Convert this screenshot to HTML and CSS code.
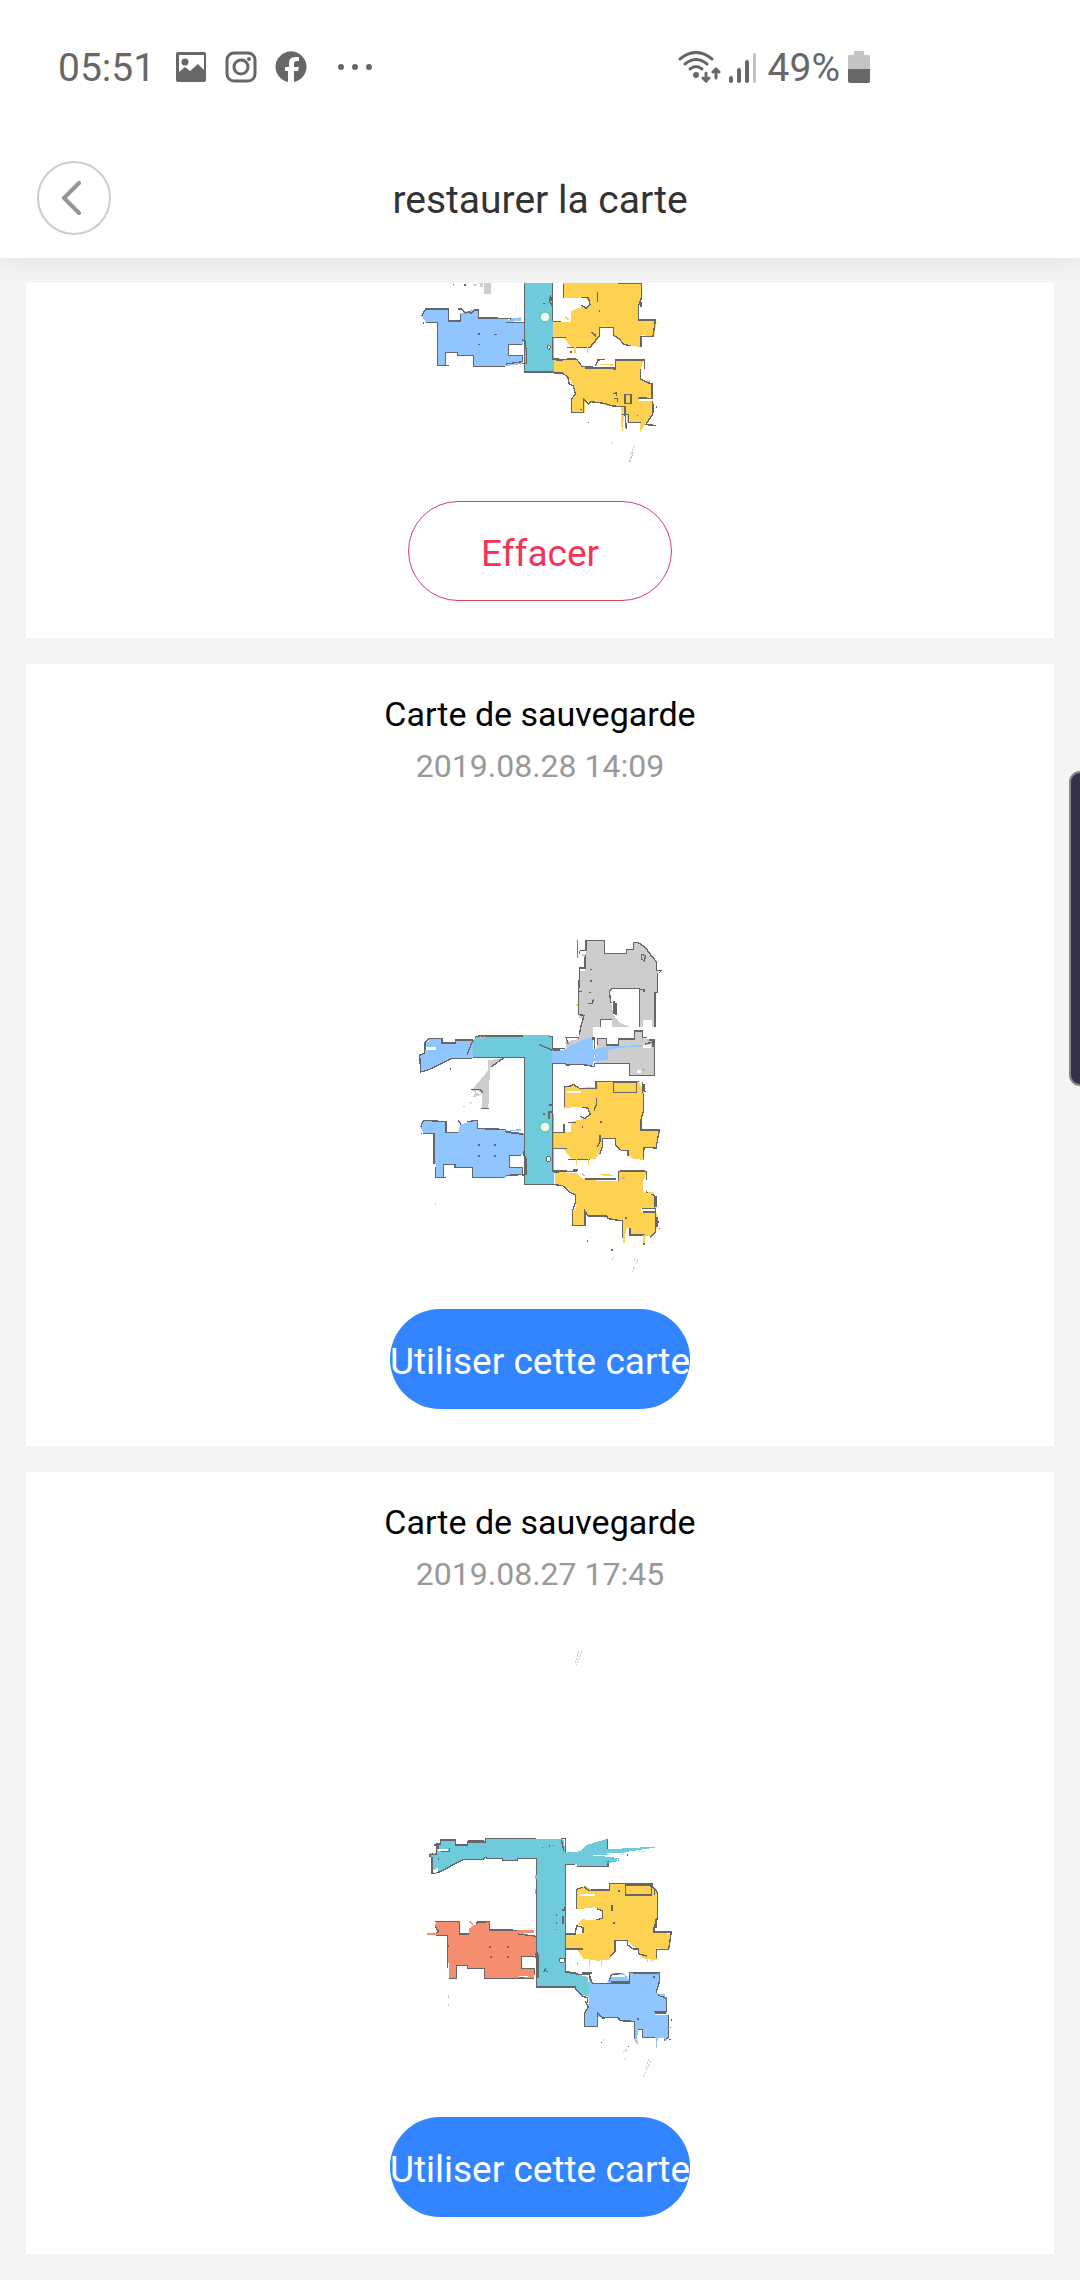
FILE: index.html
```html
<!DOCTYPE html>
<html lang="fr">
<head>
  <meta charset="UTF-8">
  <meta name="viewport" content="width=device-width, initial-scale=1.0">
  <title>restaurer la carte</title>
  <link rel="stylesheet" href="styles.css">
</head>
<body>
  <header class="top">
    <div class="status">
      <div class="status-side">
        <span class="time">05:51</span>
        <svg width="32" height="32" viewBox="0 0 32 32">
          <path fill-rule="evenodd" d="M3 1h26q2 0 2 2v26q0 2-2 2H3q-2 0-2-2V3q0-2 2-2zM4 4v17l6-5 5 4 8-7 6 6V4z"/>
          <circle cx="10" cy="11" r="3.5"/>
        </svg>
        <svg width="32" height="32" viewBox="0 0 32 32" fill="none" stroke="#676767" stroke-width="3">
          <rect x="2" y="2" width="28" height="28" rx="7"/>
          <circle cx="16" cy="16" r="7"/>
          <circle cx="24" cy="8" r="2" fill="#676767" stroke="none"/>
        </svg>
        <svg width="32" height="32" viewBox="0 0 32 32">
          <path d="M13 31A15.500 15.500 0 1 1 19 31V20h4l1-4h-5v-3q0-3 3-3h2V6h-4q-6 0-6 6v4h-4v4h3z"/>
        </svg>
        <svg class="more" width="36" height="32" viewBox="0 0 36 32">
          <circle cx="4" cy="16" r="3"/><circle cx="18" cy="16" r="3"/><circle cx="32" cy="16" r="3"/>
        </svg>
      </div>
      <div class="status-side">
        <svg width="43" height="32" viewBox="0 0 43 32">
          <g fill="none" stroke="#676767" stroke-width="3" stroke-linecap="round">
            <path d="M2 8Q18-5 34 8"/>
            <path d="M7 13Q18 4 29 13"/>
            <path d="M12 18Q18 13 24 18"/>
            <path d="M28 22v7M25 27l3 3 3-3"/>
            <path d="M38 27v-8M35 21l3-3 3 3"/>
          </g>
          <circle cx="18" cy="24" r="3"/>
        </svg>
        <svg class="signal" width="27" height="32" viewBox="0 0 27 32">
          <rect x="0" y="25" width="4" height="7" rx="2"/>
          <rect x="8" y="17" width="4" height="15" rx="2"/>
          <rect x="16" y="9" width="4" height="23" rx="2"/>
          <rect x="24" y="2" width="3" height="30" rx="1" fill="#c4c4c4"/>
        </svg>
        <span class="percent">49%</span>
        <svg width="22" height="32" viewBox="0 0 22 32">
          <path fill="#c4c4c4" d="M6 0h10v4h5q1 0 1 1v14H0V5q0-1 1-1h5z"/>
          <path d="M0 18h22v12q0 2-2 2H2q-2 0-2-2z"/>
        </svg>
      </div>
    </div>
    <nav class="bar">
      <button class="back" aria-label="Retour">
        <svg width="20" height="34" viewBox="0 0 20 34" fill="none" stroke="#959595" stroke-width="4" stroke-linecap="round" stroke-linejoin="round">
          <path d="M18 2L3 17l15 15"/>
        </svg>
      </button>
      <h1>restaurer la carte</h1>
    </nav>
  </header>

  <main>
    <section class="card">
      <svg class="map" viewBox="0 39 840 573" role="img" aria-label="Carte actuelle">
        <g class="room">
          <path class="gray" d="M251 39h21v32h-21zM218 42h12v6h-12zM238 39h10v12h-6z"/>
          <path class="blue" d="M77 116L145 120V154H181V130L205 122 235 118V144L318 146 345 156 374 160V208L368 224H327V258H366V282L318 288H222V256H172V248H136V286H114V157H77L65 137z"/>
          <path class="blue" d="M328 146l35-4v10h-30z"/>
          <path class="teal" d="M374 39h85l3 269h-88z"/>
          <path class="yellow" d="M490 39H725V85L717 108V150L770 155 762 200 724 195V232L690 225 672 222 655 205 640 195V172H598V200L585 222 570 232H515L490 203H460V157H512V124L540 112 565 112 568 88 545 82 490 85z"/>
          <path class="yellow" d="M461 268L530 270 545 288 580 294H648V268H732L722 298V328L738 335 756 345V382L716 384V392L757 392 762 400 757 440 735 462 722 486V458H682V434H672L668 486 662 460V412L620 408 600 399 570 400 555 388V428H515V388L526 372 520 345 505 325 490 310H461z"/>
        </g>
        <path class="wall" d="M77 158h36v128M65 137l12-20h68v36h36v-22M174 117h12l10 12 12-4 5 7 10-12h13v26M234 144l98 1v4M318 157h55M374 39v267h88M458 39v50M458 89v65M458 202v65l73 2 15 20M452 75l-4 18 8 14M367 210l8 2v20l4 5v44h-12M367 224h-41v33h42v18l-50 7M316 289h-96v-33h-48v-8h-36v40M112 286h34M491 41v42M544 82l22 2 4 20-12 11-14-10M655 40h69v44l-8 23v43h50l-7 50h-36v30M458 155h24M458 203h40M500 232h70l28-35v-25h42v24l17 10 15 17 20 4M546 289l100 8v-27h88v26M586 288l8-18 20-2M722 296v32l16 7 18 8v45M715 386h42M462 309h26l16 14 4 20 12 4 6 24-12 17v40h37v-41l14 16 8-8 40 5 24 8 38 2v20l4 48 2-8M667 434h18v24h36v28M757 392v42l-20 30 30 2M592 65v32M575 185l12 15M675 374h18v26h-18zM640 372l10-5v10M642 385h10v10"/>
        <path class="wide" d="M458 267l30 4M502 266h26M554 293h90M652 270h80M757 340v44M716 384h26M759 402v28M724 96v15M235 145h60M453 80v14"/>
        <path class="specks" d="M235 191h5M282 193h8M235 223h4M430 100h4M598 122h3M585 195h4M541 418h4M711 436h4M564 457h4M768 410h3M770 430h2M160 43h2M192 45h6M70 158h2M510 245h5"/>
        <path class="drip" d="M525 232v17M562 230v20M668 455v26M722 460v26M740 333h10M600 283l40 2M495 140l12 10"/>
        <path class="faint" d="M638 516l-8 10M704 527l-12 24 8-4-12 33M698 548l-12 30"/>
        <ellipse class="hole outlined" cx="446" cy="232" rx="5" ry="6"/>
        <circle class="dock-ring" cx="435" cy="141" r="18"/>
        <circle class="dock" cx="435" cy="141" r="13"/>
      </svg>
      <button class="btn outline">Effacer</button>
    </section>

    <section class="card">
      <h2>Carte de sauvegarde</h2>
      <p class="date">2019.08.28 14:09</p>
      <svg class="map" viewBox="0 -294 840 1380" role="img" aria-label="Carte du 28 août 2019">
        <g class="room">
          <path class="gray" d="M558 62h55v38h67V88h20V68h15l20 14 17 22 18 22v26h5v66h-9v104h-11v-23h-25v23h-11V208l-82-3-7 10 4 35 6 35 20 23 30 13h-55v-22h-33v22h-22v40l-80 30-4-26 39-8 7-30 10-34h-16v-70l4-70h16v-40l-16-12h18z"/>
          <path class="gray" d="M592 355h28v20h35v-20h49v-22h24v19l12 6h23v108h-73v-36H585z"/>
          <path class="gray" d="M263 421l52-8-45 30-5 122h-20v-40l-30-14 48-58zM230 510l-12 22 30-8z"/>
          <path class="blue" d="M456 391l42-3 12-12 35-14 35-12v38l40-8 105-5v5l-60 3-41 7v29l-44 6v10l-70-4-54-1z"/>
          <path class="blue" d="M84 355h42v13h39v-6l54-2v53l-64 2-73 37-20 3-4-53h17v-35h12z"/>
          <path class="teal" d="M229 350h141v-5h77l10 5v215l4 20v209h-87V412H219v-47z"/>
          <path class="blue" d="M70 601L138 605V636H175L180 614 205 606 232 602V628L320 630 345 642 374 645V692L366 706H328V742H368V763L320 768V772H218V742H165V733H130V770H108L103 640H70L62 622z"/>
          <path class="blue" d="M330 630l34-3v6h-34z"/>
          <path class="yellow" d="M493 502L520 494 535 504 588 500V484H715L732 515V580L722 605V630L778 634 768 685H732V720L700 716 682 705V692H665L648 675V655H607V680L598 700 585 718H515L490 685H462V636H512V606L550 596 570 594 568 566 525 560 493 566z"/>
          <path class="yellow" d="M464 755L530 760 545 775 590 782H655V755H740L730 785 728 812 742 822 765 828V862L722 865V876L770 880V925L760 945 735 950 730 968V945H692V925H680L672 965 667 942V902L620 895 600 888H565L555 873V916H518V878L530 858 525 822 508 810 492 796H464z"/>
        </g>
        <path class="wall" d="M540 92h18V62h55v38h67V88h20V68h15l20 14 17 22 18 22v26h14l-8 8M773 158v60h-8v103M539 92v10M556 104v40h-17l-3 72v68l16 2-10 36-4 22M637 205h82v8M719 214v108M637 205l-9 10 5 35M602 320v-22h33M704 355v-22h24v19h12M592 375v-20h28v20h35v-18h49v-20M748 360h16v106h-76v-36H583v10l-20-4-22-3-42 2-4-4h-40M584 352v36M500 352h36v6M498 352l6 20M75 390v-23l12-12h39v14h40v-8l52-2M219 360l-18 44M225 352l10-4h135M447 349h10v38l38-1M418 374l38 16M374 412h-60l-40 28M314 412h-96M215 415h-60l-73 36-20 5-3-50 14-6v-20M373 412v382h102M457 432v300M213 508h28l8 10M244 565h24M70 640h32v92M106 742v30M62 622l8-21 68 4v32h36M175 600l8 14M200 606l20-4h12v24l86 2M316 635l56 9M372 692v14l6 8v50l-12 2M364 706h-36v36h40v22l-50 2M316 773h-98v-31h-53v-8h-35v38M104 772h34M493 562v-62l20-2 8-5 15 11M536 506h52v-22h130M640 488h70v30h-70zM728 487v32M731 520v50l-8 28v32h55l-10 54-36-2-2 36M684 708v-16h-19l-18-17v-20h-40v24l-8 24M570 718h-65M458 685v68l72 2M458 685h42M458 637h34v-26M504 608h25M545 562l18 2 8 20-18 12-12-8M655 755h85v24M655 755v28M463 794l25 3 20 18 19 11v20l-6 15-4 16v39h38v-42l10 14h55l5 8 43 7v50M690 925v20h42v30M738 815l26 12v38M725 865h42v70l-18 18"/>
        <path class="scan" d="M533 60v53"/>
        <path class="wide" d="M166 361h52M520 750h14M555 778h94M660 754h76M768 828v34M728 877h40M770 890v30M462 756l40-4M665 485h42M732 492v20M555 110v30M447 596v-20h10M447 555h10M724 600v25M643 243v40M649 248v36M320 636l50 6M458 390h22M580 350v10"/>
        <path class="wall" d="M725 103l12 4-4 16-8-6zM565 250h12l4-14M537 215h8M720 208h12v8M735 372l24-6v16M590 535v16l-8 20M600 645v20l-8 16"/>
        <path class="hole" d="M78 380h30v9H78zM539 112h12v22h-12zM710 450h14v10h-14zM730 376h24v8h-24zM500 514h42v6h-42zM582 405h4v10h-4zM595 758h44v9h-44z"/>
        <path class="specks" d="M570 148h5M570 182h5M568 217h5M234 674h5M282 674h5M234 708h5M282 708h5M600 606h5M675 893h5M733 514h4M371 475h3M371 515h3M215 508h4M62 640h3M430 582h4M560 962h4M634 990h4M775 905h3M778 925h2M150 446h3M730 448h3M545 620h4"/>
        <path class="drip" d="M530 715v20M566 715v20M672 940v28M732 945v24M745 819h14M600 764l40 2M531 252v5"/>
        <path class="faint" d="M190 560h6M210 550l10-6M106 850v4M643 1010l-8 10M706 1015l-4 12M714 1018l-8 18M702 1042l-4 14M570 955l4-6"/>
        <path class="smear" d="M240 350l8 5 8-5M545 760l10 8M662 774h14"/>
        <ellipse class="hole outlined" cx="446" cy="717" rx="6" ry="8"/>
        <circle class="dock-ring" cx="435" cy="621" r="18"/>
        <circle class="dock" cx="435" cy="621" r="13"/>
      </svg>
      <button class="btn">Utiliser cette carte</button>
    </section>

    <section class="card">
      <h2>Carte de sauvegarde</h2>
      <p class="date">2019.08.27 17:45</p>
      <svg class="map" viewBox="0 0 840 1380" role="img" aria-label="Carte du 27 août 2019">
        <g class="room">
          <path class="teal" d="M122 630H167V645H202V636H256V626H490L497 668 540 664 560 645 623 626V658L765 650V653L690 664 655 672 580 676 658 684 640 696 624 700V709H530V703H497V1026L535 1033 565 1042 567 1100 545 1094 530 1078 514 1071H410V685H353V691H308V685H258L192 689 118 727 96 731 94 673H110V642H122z"/>
          <path class="red" d="M107 873H179V912H208V895L246 872 268 876V898L403 902V908H360L410 920V965L402 979H365V1015H403V1045H254V1015H202V1007H170V1045H147L143 917H107L114 902 106 890z"/>
          <path class="yellow" d="M530 778L558 768 575 780 628 778V760H755L770 780V862L762 890V906L814 912 806 958 770 955V990L728 985 715 972V957L700 950 683 935V932H645V968L630 980 628 990 590 992 550 986 530 957H497V913H550V885H530L545 868 590 870 608 866V840L585 832 530 838z"/>
          <path class="blue" d="M567 1030L575 1058 620 1062 635 1030 670 1028 690 1052V1028H778V1060L768 1088 800 1102V1148H765V1154H805V1222L775 1225 768 1250V1225H728V1198H716L708 1240 703 1222V1174L655 1170 645 1160H595V1190H553V1150L567 1120z"/>
        </g>
        <path class="wall" d="M90 682V672H110V642H122V630H167V645H202V636H256V626H408M484 626H497L496 668M484 630L492 664M497 703V1026L535 1033H568L575 1056M497 703H525M530 709H624V694M623 626V658M410 685H353V691H308V685H260L255 681 250 688H192L118 726 96 731V680M122 665H148V655M410 685V1071H527V1078L545 1094 548 1100 562 1102V1120M106 874H179V912H208M108 917H143V1015M228 880L246 874H268V898L352 901M354 912L410 919M410 966L414 974V1044M405 979H365V1015H403V1034M403 1046H254V1015H202V1006H170V1045H148M105 890L115 902 107 914M530 838V778L548 772M573 780H628V760H758V768M676 765H754V795H676zM766 778L772 790V864L762 892V906H814L806 958H770V985M742 979L715 971V957H700L683 945V932H645V964L630 980M497 957H548M497 912H525L530 888 549 892V910M590 836L608 842V864L590 870M568 1042L578 1060H688V1028H778V1056L768 1088M774 1095L800 1105V1145H762M805 1155V1223L793 1231M766 1222H727V1198H715M703 1226V1174L659 1172 655 1162H606L593 1148V1189H553V1150L565 1132 556 1112M628 1052L634 1034 664 1030"/>
        <path class="wide" d="M205 634h46M102 644h12v14M268 899h66M700 762h32M485 840h10v-8M490 858v24M700 1028h74M632 1056h54M765 1148h34M768 866v28M358 1040h14M498 1026l30 4M545 1030h30M407 970l4 20M635 826v18M232 875h26"/>
        <path class="wall" d="M436 1024h-8M438 1016l-4 4 8 6M752 768l12 8v20M552 770l8 8 12 4"/>
        <path class="hole" d="M114 657h30v6h-30zM580 675h74v4h-74zM620 669h60v2h-60zM540 793h46v4h-46zM636 1034h38v8h-38zM356 1038h28v4h-28zM98 722l14-8 4 10-14 6z"/>
        <path class="specks" d="M268 950h5M321 950h5M270 981h5M321 981h5M143 948h4M426 652h4M446 648h4M459 646h4M114 687h4M468 855h4M468 878h4M468 898h4M640 879h5M654 782h5M711 1167h5M760 1040h5M812 1170h3M811 1192h2M808 1228h4M680 674h4M606 1164h8M602 1237h3M684 1249h3M530 1000h4M568 996h3"/>
        <path class="drip drip-blue" d="M708 1215l4 28M770 1225v28M792 1222l8 10M780 1095h14"/>
        <path class="drip" d="M568 985v22M604 985v24M742 978v18M756 978v14M760 776v12"/>
        <path class="drip drip-teal" d="M408 735v12M406 778v14M622 698l36-8"/>
        <path class="drip drip-red" d="M82 912h28M208 872l12 14 12 4M364 902h38"/>
        <path class="faint" d="M88 671h18M714 664h18M536 64l-6 20-6 18M545 64l-8 22-8 18M144 1096v8M144 1122v6M610 1226v8M682 1258l-12 10M678 1284l-6 8M746 1286l-10 30M752 1294l-14 28M736 1326l-8 18M664 674h10"/>
        <ellipse class="hole outlined" cx="486" cy="991" rx="8" ry="7"/>
      </svg>
      <button class="btn">Utiliser cette carte</button>
    </section>
  </main>

  <div class="edge-handle"></div>
</body>
</html>
```
FILE: styles.css
```css
* { box-sizing: border-box; }
body { position: relative; margin: 0; background: #f4f4f4; color: #000; font-family: Roboto, "Liberation Sans", sans-serif; overflow-x: hidden; }
h1, h2, p { margin: 0; font-weight: 400; }
button { font-family: inherit; cursor: pointer; }
svg { display: block; }

.top { background: #fff; box-shadow: 0 6px 20px rgba(0,0,0,0.06); }
.status { display: flex; justify-content: space-between; align-items: center; height: 138px; padding: 0 210px 4px 58px; color: #676767; fill: #676767; font-size: 39px; }
.status-side { display: flex; align-items: center; gap: 18px; }
.status-side .time { margin-right: 2px; }
.status-side .more { margin-left: 12px; }
.status-side:last-child { gap: 8px; }
.percent { margin-left: 4px; }
.time, .percent { padding-top: 2px; }

.bar { display: grid; grid-template-columns: 74px 1fr 74px; align-items: center; height: 120px; padding: 0 37px; }
.bar h1 { padding-top: 4px; color: #333; font-size: 39px; line-height: 44px; text-align: center; }
.back { display: flex; align-items: center; justify-content: center; width: 74px; height: 74px; padding: 0 6px 0 0; border: 2px solid #ccc; border-radius: 50%; background: #fff; }

main { display: flex; flex-direction: column; gap: 26px; padding: 25px 26px 26px; }
.card { display: flex; flex-direction: column; align-items: center; padding-bottom: 37px; background: #fff; }
.card h2 { margin-top: 28px; font-size: 34px; line-height: 44px; }
.date { margin-top: 4px; margin-bottom: 30px; color: #999; font-size: 32px; line-height: 52px; }
.btn { min-width: 264px; height: 100px; margin-top: 27px; padding: 4px 0 0; border: none; border-radius: 50px; background: #3385ff; color: #fff; font-size: 37px; white-space: nowrap; }
.btn.outline { border: 1px solid #d9415d; background: #fff; color: #f23557; }

/* maps */
.map { width: 280px; shape-rendering: crispEdges; }
.gray { fill: #cdcdcd; }
.blue { fill: #90c5ff; }
.teal { fill: #6fcadc; }
.yellow { fill: #fdd251; }
.red { fill: #f58e6f; }
.hole { fill: #fff; }
.outlined { stroke: #666; stroke-width: 3; }
.wall, .wide, .scan, .specks, .drip, .faint, .smear { fill: none; stroke: #666; stroke-width: 4; }
.wide { stroke-width: 6; }
.scan { stroke: #8f7a4a; stroke-width: 3; }
.specks { stroke-width: 5; }
.drip { stroke: #fdd251; }
.drip-blue { stroke: #90c5ff; }
.drip-teal { stroke: #6fcadc; }
.drip-red { stroke: #f58e6f; }
.faint { stroke: #ccc; stroke-width: 3; stroke-dasharray: 7 3; }
.smear { stroke: #e5a9ac; }
.dock { fill: #f6faf4; shape-rendering: auto; }
.dock-ring { fill: #5bcfae; shape-rendering: auto; }

.edge-handle { position: absolute; top: 771px; right: 0; width: 11px; height: 315px; border: 2px solid #86868c; border-right: none; border-radius: 14px 0 0 14px; background: #353149; }
```
